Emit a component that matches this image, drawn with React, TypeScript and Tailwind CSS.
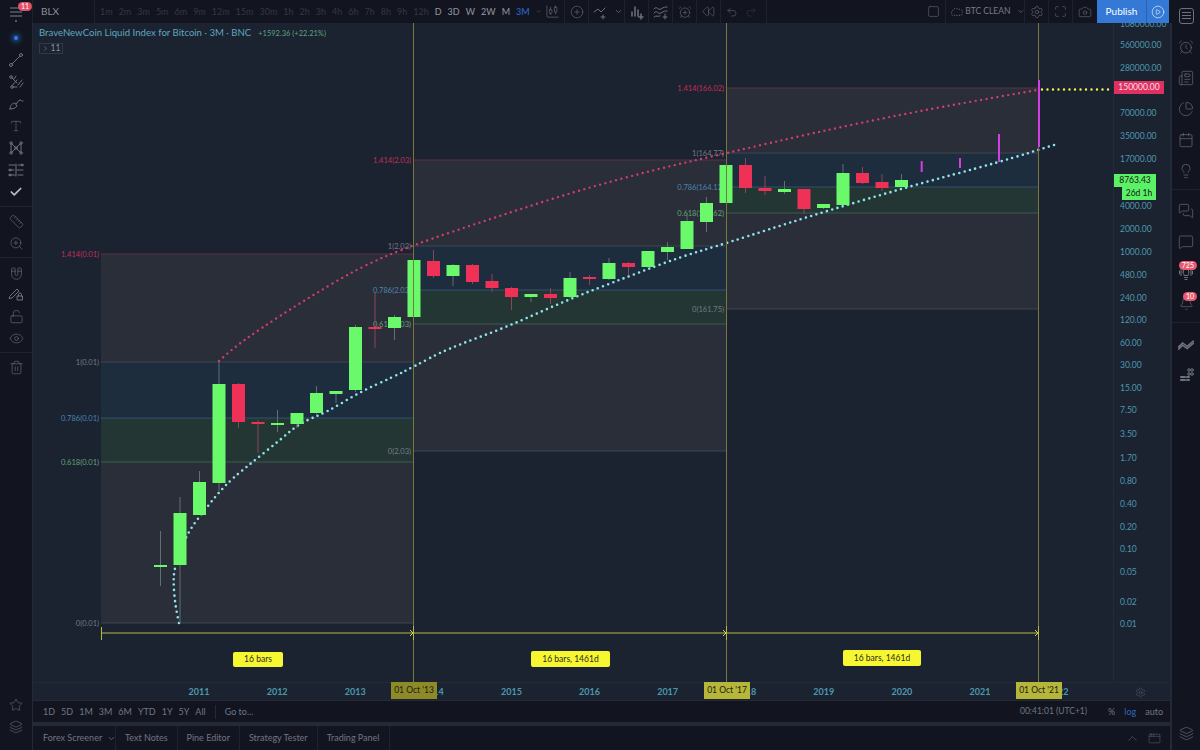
import type { ReactNode } from "react";
import {
  AlarmClock, AlarmClockPlus, Bell, Calendar, Camera, CandlestickChart, ChartPie, Check, ChevronDown, ChevronUp,
  ChevronRight, CirclePlay, CirclePlus, Eye, Layers, Lightbulb, LockOpen, Magnet, Maximize, MessageSquare,
  MessagesSquare, Newspaper, Redo2, Rewind, Ruler, Settings, Square, Star, Trash2, Type, Undo2, ZoomIn, AppWindow,
} from "lucide-react";

type Candle = [number, number, number, number, "g" | "r"];

// top of body, bottom of body, wick top, wick bottom, colour
const candles: Candle[] = [
  [565, 567, 531, 586, "g"], [513, 565, 497, 623, "g"], [482, 515, 471, 515, "g"], [384, 483, 362, 491, "g"],
  [384, 422, 383, 428, "r"], [422, 424, 420, 453, "r"], [423, 425, 410, 432, "g"], [413, 424, 413, 428, "g"],
  [393, 413, 386, 414, "g"], [391, 394, 391, 403, "g"], [327, 390, 325, 392, "g"], [327, 329, 293, 348, "r"],
  [317, 328, 315, 340, "g"], [260, 317, 260, 317, "g"], [261, 276, 250, 278, "r"], [265, 276, 264, 286, "g"],
  [265, 282, 264, 284, "r"], [281, 288, 274, 292, "r"], [288, 297, 287, 310, "r"], [294, 297, 294, 302, "g"],
  [294, 298, 288, 304, "r"], [278, 297, 272, 298, "g"], [277, 279, 275, 285, "r"], [263, 279, 258, 280, "g"],
  [263, 267, 262, 275, "r"], [251, 267, 251, 268, "g"], [247, 252, 242, 260, "g"], [221, 249, 213, 249, "g"],
  [203, 222, 197, 232, "g"], [165, 203, 165, 203, "g"], [165, 188, 158, 193, "r"], [188, 191, 176, 195, "r"],
  [189, 192, 181, 194, "g"], [189, 209, 189, 214, "r"], [204, 208, 204, 209, "g"], [173, 205, 164, 205, "g"],
  [173, 183, 167, 184, "r"], [182, 188, 174, 191, "r"], [180, 187, 174, 187, "g"],
];

const fibBoxes = [
  { x: 101, w: 312, a: 254, b: 362, c: 418, d: 462, e: 623, tags: ["1.414(0.01)", "1(0.01)", "0.786(0.01)", "0.618(0.01)", "0(0.01)"] },
  { x: 413, w: 313, a: 160, b: 246, c: 290, d: 324, e: 451, tags: ["1.414(2.03)", "1(2.03)", "0.786(2.03)", "0.618(2.03)", "0(2.03)"] },
  { x: 726, w: 312, a: 88, b: 153, c: 187, d: 213, e: 309, tags: ["1.414(166.02)", "1(164.77)", "0.786(164.12)", "0.618(163.62)", "0(161.75)"] },
];

const tagColors = ["#c22f58", "#737a86", "#4a86b0", "#63a37a", "#737a86"];

const cyanPts = [
  [179, 623], [176, 610], [173.5, 587], [174, 568], [187, 533], [207, 507], [221, 490], [233, 478], [255, 460],
  [280, 440], [300, 423], [327, 412], [360, 392], [393, 377], [413, 367], [447, 349], [507, 327], [567, 300],
  [627, 277], [680, 257], [727, 243], [807, 217], [907, 187], [1000, 162], [1057, 144],
];
const redPts = [
  [219, 361], [232, 349], [260, 329], [300, 303], [360, 267], [413, 245], [493, 218], [573, 192], [653, 170],
  [727, 153], [813, 133], [913, 112], [1037, 90],
];

const smooth = (pts: number[][]) => {
  let d = `M${pts[0][0]} ${pts[0][1]}`;
  for (let i = 1; i < pts.length - 1; i++) {
    const mx = (pts[i][0] + pts[i + 1][0]) / 2;
    const my = (pts[i][1] + pts[i + 1][1]) / 2;
    d += ` Q${pts[i][0]} ${pts[i][1]} ${mx} ${my}`;
  }
  const last = pts[pts.length - 1];
  return d + ` L${last[0]} ${last[1]}`;
};

const ticks: [string, number][] = [
  ["1080000.00", 24], ["560000.00", 45], ["280000.00", 68], ["70000.00", 113], ["35000.00", 136], ["17000.00", 159],
  ["4000.00", 206], ["2000.00", 229], ["1000.00", 252], ["480.00", 275], ["240.00", 298], ["120.00", 320],
  ["60.00", 343], ["30.00", 365], ["15.00", 388], ["7.50", 410], ["3.50", 434], ["1.70", 458], ["0.80", 481],
  ["0.40", 504], ["0.20", 527], ["0.10", 549], ["0.05", 572], ["0.02", 602], ["0.01", 624],
];

const dimFrames = ["1m", "2m", "3m", "5m", "6m", "9m", "12m", "15m", "30m", "1h", "2h", "3h", "4h", "6h", "7h", "8h", "9h", "12h"];
const years = ["2011", "2012", "2013", "2014", "2015", "2016", "2017", "2018", "2019", "2020", "2021", "2022"];
const ranges = ["1D", "5D", "1M", "3M", "6M", "YTD", "1Y", "5Y", "All"];
const tabs = ["Text Notes", "Pine Editor", "Strategy Tester", "Trading Panel"];

function Stroke({ size = 16, children }: { size?: number; children: ReactNode }) {
  return (
    <svg width={size} height={size} viewBox="0 0 16 16" fill="none" stroke="currentColor" strokeWidth="1" strokeLinecap="round" strokeLinejoin="round">
      {children}
    </svg>
  );
}

const TrendLine = () => (
  <Stroke>
    <circle cx="3" cy="13" r="1.5" /><circle cx="13" cy="3" r="1.5" /><path d="M4.2 11.8 11.8 4.2" />
  </Stroke>
);
const FibFork = () => (
  <Stroke>
    <circle cx="3" cy="3" r="1.3" /><circle cx="4" cy="13" r="1.3" /><path d="M4 4l5 5M5.3 13H9M4 11.8 9 6M8 2l-2 3M14 6l-4 5M15 9l-3 4" />
  </Stroke>
);
const Brush = () => (
  <Stroke>
    <path d="M2 13c0-4 3-6 5-6l2 3c-1 2-4 3-7 3ZM8 8c2-1 2-4 4-4s1 2 3 1" />
  </Stroke>
);
const Xabcd = () => (
  <Stroke>
    <circle cx="3" cy="3" r="1.2" /><circle cx="13" cy="3" r="1.2" /><circle cx="8" cy="8" r="1.2" /><circle cx="3" cy="13" r="1.2" /><circle cx="13" cy="13" r="1.2" />
    <path d="M3 4.2v7.6M13 4.2v7.6M3.8 3.8l3.5 3.5M12.2 3.8 8.7 7.3M3.8 12.2l3.5-3.5M12.2 12.2 8.7 8.7" />
  </Stroke>
);
const Prediction = () => (
  <Stroke>
    <path d="M1 3h6M10 3h5M1 8h5M9 8h6M1 13h6M10 13h5M8 2v12" />
    <circle cx="2" cy="8" r="1" /><circle cx="14" cy="3" r="1" /><circle cx="2" cy="13" r="1" />
  </Stroke>
);
const PencilLock = () => (
  <Stroke>
    <path d="M2 10 9 3l2 2-7 7-2.500 .5Z" /><rect x="9.500" y="10" width="5" height="4" /><path d="M10.500 10V8.500a1.500 1.500 0 0 1 3 0V10" />
  </Stroke>
);
const Hotline = () => (
  <Stroke>
    <path d="M5 7a3 3 0 1 1 6 0c0 1.500-1 2-1 3.500H6C6 9 5 8.500 5 7ZM6.500 12.500h3M7 14.500h2M3 4.500v6M1.500 6v3M13 4.500v6M14.500 6v3" />
  </Stroke>
);
const Wave = () => (
  <svg width="18" height="18" viewBox="0 0 16 16" fill="none" stroke="currentColor" strokeWidth="1.300">
    <path d="M1 11l4-4 4 3 6-5M1 13l4-4 4 3 6-5" />
  </svg>
);
const DotsGrid = () => (
  <Stroke>
    <circle cx="11" cy="3" r="1.300" /><circle cx="14" cy="3" r="1.300" /><circle cx="11" cy="7" r="1.300" /><circle cx="14" cy="7" r="1.300" />
    <path d="M3 10h4M3 13h4M9 10h2M9 13h2" strokeWidth="2" />
  </Stroke>
);
const BarsPlus = () => (
  <Stroke>
    <path d="M3 12V8M6 12V3M9 12V6M12 10v5M10 13h4" strokeWidth="1.500" />
  </Stroke>
);
const WavesPlus = () => (
  <Stroke>
    <path d="M1 5c3-4 4 2 7 0s4-2 6-2M1 9c3-4 4 2 7 0s4-2 6-2M1 13c2-2 4 0 6-1M12 10v5M10 13h4" />
  </Stroke>
);
const LinePlus = () => (
  <Stroke>
    <path d="M1 8l4-3 3 3 4-4M10 11v4M8 13h4" />
  </Stroke>
);

function Tool({ children }: { children: ReactNode }) {
  return <div className="flex h-[22px] items-center justify-center text-[#6b7280]">{children}</div>;
}

function TopIcon({ w, children, border = false }: { w: number; children: ReactNode; border?: boolean }) {
  return (
    <div style={{ width: w }} className={`flex h-full shrink-0 items-center justify-center text-[#6b7280] ${border ? "border-r border-[#1e222c]" : ""}`}>
      {children}
    </div>
  );
}

function Widget({ children, badge }: { children: ReactNode; badge?: string }) {
  return (
    <div className="relative flex h-[31px] shrink-0 items-center justify-center text-[#6b7280]">
      {children}
      {badge && (
        <span className="absolute right-[3px] top-[4px] rounded-full bg-[#e85a6f] px-[3px] text-[7px] leading-[9px] text-white">{badge}</span>
      )}
    </div>
  );
}

export default function App() {
  return (
    <div className="flex h-[750px] w-[1200px] overflow-hidden bg-[#232936] font-['Lato',sans-serif] text-[9px] text-[#8a909c]">
      <div className="flex w-[1172px] shrink-0 flex-col">
        {/* top bar */}
        <div className="relative z-10 flex h-[23px] shrink-0 items-center bg-[#12151f]">
          <div className="relative flex h-full w-[33px] shrink-0 items-center justify-center border-r border-[#1e222c] text-[#7a808c]">
            <svg width="14" height="12" viewBox="0 0 14 12" fill="none" stroke="currentColor" strokeWidth="1">
              <path d="M1 2h12M1 6h12M1 10h12" />
            </svg>
            <span className="absolute left-[18px] top-[2px] rounded-full bg-[#e5506a] px-[3px] text-[7px] leading-[9px] text-white">11</span>
            <span className="absolute left-[15px] top-[20px] h-[2px] w-[2px] rounded-full bg-[#6b7280]" />
          </div>
          <div className="flex h-full w-[62px] shrink-0 items-center border-r border-[#1e222c] pl-2 text-[10px] text-[#8a909c]">BLX</div>
          <div className="flex w-[446px] shrink-0 items-center gap-[6px] pl-[5px] text-[9px]">
            {dimFrames.map((f) => (
              <span key={f} className="text-[#333844]">{f}</span>
            ))}
            {["D", "3D", "W", "2W", "M"].map((f) => (
              <span key={f} className="font-medium text-[#8a909c]">{f}</span>
            ))}
            <span className="font-medium text-[#2c66c4]">3M</span>
            <ChevronDown size={9} className="text-[#6b7280]" />
          </div>
          <TopIcon w={24} border><CandlestickChart size={15} strokeWidth={1} /></TopIcon>
          <TopIcon w={24} border><CirclePlus size={14} strokeWidth={1} /></TopIcon>
          <TopIcon w={23}><LinePlus /></TopIcon>
          <TopIcon w={13} border><ChevronDown size={9} /></TopIcon>
          <TopIcon w={24} border><BarsPlus /></TopIcon>
          <TopIcon w={24} border><WavesPlus /></TopIcon>
          <TopIcon w={24} border><AlarmClockPlus size={14} strokeWidth={1} /></TopIcon>
          <TopIcon w={24} border><Rewind size={13} strokeWidth={1} /></TopIcon>
          <TopIcon w={22}><Undo2 size={12} strokeWidth={1} /></TopIcon>
          <TopIcon w={16}><span className="text-[#3a3f4b]"><Redo2 size={12} strokeWidth={1} /></span></TopIcon>
          <div className="h-full w-[8px] border-r border-[#1e222c]" />
          <div className="flex-1" />
          <TopIcon w={24} border><Square size={13} strokeWidth={1} /></TopIcon>
          <div className="flex h-full w-[79px] shrink-0 items-center gap-[2px] border-r border-[#1e222c] pl-1 text-[8.500px] text-[#757b88]">
            <svg width="16" height="12" viewBox="0 0 16 12" fill="none" stroke="currentColor" strokeDasharray="1.500 1.500">
              <path d="M3 10a3 3 0 0 1 0-5 4 4 0 0 1 7-2 3.500 3.500 0 0 1 3 7Z" />
            </svg>
            <span className="whitespace-nowrap">BTC CLEAN</span>
            <ChevronDown size={9} className="ml-[4px]" />
          </div>
          <TopIcon w={24} border><Settings size={14} strokeWidth={1} /></TopIcon>
          <TopIcon w={24} border><Maximize size={13} strokeWidth={1} /></TopIcon>
          <TopIcon w={24}><Camera size={14} strokeWidth={1} /></TopIcon>
          <div className="flex h-full w-[49px] shrink-0 items-center justify-center bg-[#3579d6] text-[10px] text-white">Publish</div>
          <div className="flex h-full w-[23px] shrink-0 items-center justify-center border-l border-[#2a62b0] bg-[#3579d6] text-white">
            <CirclePlay size={14} strokeWidth={1} />
          </div>
          <div className="w-[3px] shrink-0" />
        </div>

        <div className="flex min-h-0 flex-1">
          {/* left tools */}
          <div className="flex w-[32px] shrink-0 flex-col bg-[#12151f] pt-[4px]">
            <div className="border-b border-[#1e222c] pb-[3px]">
              <Tool><span className="h-[4px] w-[4px] rounded-full bg-[#2f7de0] shadow-[0_0_5px_2px_#1f4f9a]" /></Tool>
              <Tool><TrendLine /></Tool>
              <Tool><FibFork /></Tool>
              <Tool><Brush /></Tool>
              <Tool><Type size={14} strokeWidth={1} /></Tool>
              <Tool><Xabcd /></Tool>
              <Tool><Prediction /></Tool>
              <Tool><span className="text-[#b9bdc6]"><Check size={14} strokeWidth={3} /></span></Tool>
            </div>
            <div className="border-b border-[#1e222c] py-[3px]">
              <Tool><Ruler size={15} strokeWidth={1} /></Tool>
              <Tool><ZoomIn size={15} strokeWidth={1} /></Tool>
            </div>
            <div className="border-b border-[#1e222c] py-[3px]">
              <Tool><Magnet size={15} strokeWidth={1} className="rotate-[135deg]" /></Tool>
              <Tool><PencilLock /></Tool>
              <Tool><LockOpen size={15} strokeWidth={1} /></Tool>
              <Tool><Eye size={15} strokeWidth={1} /></Tool>
            </div>
            <div className="py-[3px]">
              <Tool><Trash2 size={15} strokeWidth={1} /></Tool>
            </div>
            <div className="mt-auto pb-[12px]">
              <Tool><Star size={14} strokeWidth={1} /></Tool>
              <Tool><Layers size={14} strokeWidth={1} /></Tool>
            </div>
          </div>

          {/* centre column */}
          <div className="ml-px flex w-[1137px] shrink-0 flex-col">
            <div className="flex h-[659px] shrink-0 bg-[#1b2230]">
              <div className="relative w-[1080px] shrink-0">
                <svg width="1080" height="659" viewBox="33 23 1080 659" className="block">
                  {fibBoxes.map((b) => (
                    <g key={b.x}>
                      <rect x={b.x} y={b.a} width={b.w} height={b.b - b.a} fill="#2a2e38" />
                      <rect x={b.x} y={b.b} width={b.w} height={b.c - b.b} fill="#1e2d3e" />
                      <rect x={b.x} y={b.c} width={b.w} height={b.d - b.c} fill="#243634" />
                      <rect x={b.x} y={b.d} width={b.w} height={b.e - b.d} fill="#2a2e38" />
                      <path d={`M${b.x} ${b.a}h${b.w}`} stroke="#5a3346" />
                      <path d={`M${b.x} ${b.b}h${b.w}M${b.x} ${b.e}h${b.w}`} stroke="#3f4653" />
                      <path d={`M${b.x} ${b.c}h${b.w}`} stroke="#33516a" />
                      <path d={`M${b.x} ${b.d}h${b.w}`} stroke="#3c5a50" />
                      {b.tags.map((t, i) => (
                        <text key={t} x={b.x - 2} y={[b.a, b.b, b.c, b.d, b.e][i] + 2.500} textAnchor="end" fontSize="7.500" fill={tagColors[i]}>
                          {t}
                        </text>
                      ))}
                    </g>
                  ))}
                  <path d={smooth(redPts)} fill="none" stroke="#cf3f6a" strokeWidth="2.400" strokeLinecap="round" strokeDasharray="0 5.500" />
                  <path d={smooth(cyanPts)} fill="none" stroke="#8fe3ec" strokeWidth="2.600" strokeLinecap="round" strokeDasharray="0 5.500" />
                  <path d="M1042 89.500H1113" fill="none" stroke="#f4f45c" strokeWidth="2.400" strokeLinecap="round" strokeDasharray="0 5.500" />
                  {candles.map(([top, bottom, hi, lo, c], i) => {
                    const x = 160.500 + i * 19.500;
                    const color = c === "g" ? "#69f96a" : "#ef3157";
                    return (
                      <g key={i}>
                        <path d={`M${x} ${hi}V${lo}`} stroke={c === "g" ? "#5f6f72" : "#8a4658"} />
                        <rect x={x - 6.500} y={top} width="13" height={bottom - top} fill={color} />
                      </g>
                    );
                  })}
                  <path d="M413.500 23V682M726.500 23V682M1038.500 23V682" stroke="#78773f" />
                  <path d="M921.700 161V172M960 158V168M999 134V162M1039 80V147" stroke="#d33ee0" strokeWidth="2" />
                  <path d="M101 633H1038" stroke="#b8b84a" />
                  <path d="M101.500 627V640M413.500 626V640M726.500 626V640M1038.500 626V640" stroke="#b8b84a" />
                  <path d="M410 630l3 3-3 3M723 630l3 3-3 3M1035 630l3 3-3 3" fill="none" stroke="#d6d650" />
                </svg>
                <div className="absolute left-[6px] top-[3px] flex items-baseline gap-[7px] whitespace-nowrap">
                  <span className="text-[9.600px] text-[#5ea8bf]">BraveNewCoin Liquid Index for Bitcoin · 3M · BNC</span>
                  <span className="text-[7.500px] text-[#5aa582]">+1592.36 (+22.21%)</span>
                </div>
                <div className="absolute left-[6px] top-[20px] flex h-[11px] w-[24px] items-center justify-center gap-[2px] border border-[#333845] text-[8.500px] text-[#8a909c]">
                  <ChevronRight size={7} />11
                </div>
                <span className="absolute left-[200px] top-[629px] flex h-[15px] w-[50px] items-center justify-center rounded-[2px] bg-[#f7f731] text-[8.500px] text-[#2a2a20]">16 bars</span>
                <span className="absolute left-[498px] top-[628px] flex h-[16px] w-[79px] items-center justify-center rounded-[2px] bg-[#f7f731] text-[8.500px] text-[#2a2a20]">16 bars, 1461d</span>
                <span className="absolute left-[810px] top-[627px] flex h-[16px] w-[78px] items-center justify-center rounded-[2px] bg-[#f7f731] text-[8.500px] text-[#2a2a20]">16 bars, 1461d</span>
              </div>

              {/* price axis */}
              <div className="relative flex-1 overflow-hidden border-l border-[#232936] pl-[6px] text-[8.500px] text-[#4e98ae]">
                {ticks.map(([label, y], i) => (
                  <div key={label} className="h-[12px] leading-[12px]" style={{ marginTop: i === 0 ? y - 29 : y - ticks[i - 1][1] - 12 }}>
                    {label}
                  </div>
                ))}
                <span className="absolute left-0 top-[58px] flex h-[13px] w-[50px] items-center justify-center bg-[#e0305f] text-[8.500px] text-[#f7dfe6]">150000.00</span>
                <span className="absolute left-0 top-[151px] flex h-[13px] w-[42px] items-center justify-center bg-[#5cf067] text-[8.500px] text-[#10180f]">8763.43</span>
                <span className="absolute left-[8px] top-[164px] flex h-[13px] w-[34px] items-center justify-center bg-[#5cf067] text-[8.500px] text-[#10180f]">26d 1h</span>
              </div>
            </div>

            {/* time axis */}
            <div className="relative flex h-[18px] shrink-0 items-center border-t border-[#232936] bg-[#1b2230] pl-[127px] text-[9px] font-bold text-[#4e98ae]">
              {years.map((y) => (
                <span key={y} className="w-[78.100px] shrink-0 text-center">{y}</span>
              ))}
              <span className="absolute left-[358px] top-[-1px] flex h-[17px] w-[46px] items-center justify-center bg-[#8c8b28] text-[8.500px] font-normal text-[#1b1c12]">01 Oct '13</span>
              <span className="absolute left-[671px] top-[-1px] flex h-[17px] w-[46px] items-center justify-center bg-[#b6b63a] text-[8.500px] font-normal text-[#1b1c12]">01 Oct '17</span>
              <span className="absolute left-[983px] top-[-1px] flex h-[17px] w-[46px] items-center justify-center bg-[#b6b63a] text-[8.500px] font-normal text-[#1b1c12]">01 Oct '21</span>
              <span className="absolute left-[1102px] top-[4px] text-[#5c6370]"><Settings size={11} strokeWidth={1} /></span>
            </div>

            {/* range bar */}
            <div className="flex h-[22px] shrink-0 items-center border-t border-[#232936] bg-[#12151f] pl-[10px] pr-[7px] text-[9px] text-[#6f7684]">
              <div className="flex gap-[6px]">
                {ranges.map((r) => (
                  <span key={r}>{r}</span>
                ))}
              </div>
              <span className="ml-[9px] h-[14px] border-l border-[#232936]" />
              <span className="ml-[9px]">Go to...</span>
              <span className="ml-auto text-[8.500px]">00:41:01 (UTC+1)</span>
              <span className="ml-[21px]">%</span>
              <span className="ml-[9px] text-[#2f66ba]">log</span>
              <span className="ml-[9px]">auto</span>
            </div>

            {/* bottom tabs */}
            <div className="mt-[4px] flex min-h-0 flex-1 items-center bg-[#12151f] text-[9px] text-[#6f7684]">
              <div className="flex h-full w-[83px] shrink-0 items-center gap-[5px] border-r border-[#1e222c] pl-[10px]">
                <span className="whitespace-nowrap">Forex Screener</span>
                <ChevronDown size={9} className="shrink-0" />
              </div>
              {tabs.map((t) => (
                <div key={t} className="flex h-full items-center whitespace-nowrap border-r border-[#1e222c] px-[9px]">{t}</div>
              ))}
              <div className="ml-auto flex items-center gap-[8px] pr-[9px] text-[#5c6370]">
                <ChevronUp size={15} strokeWidth={1} />
                <AppWindow size={13} strokeWidth={1} />
              </div>
            </div>
          </div>
        </div>
      </div>

      {/* right widgets */}
      <div className="flex flex-1 flex-col bg-[#12151f]">
        <Widget>
          <span className="flex h-[16px] w-[15px] flex-col justify-center gap-[2px] rounded-[3px] border border-[#6b7280] px-[2px]">
            <span className="h-px bg-[#6b7280]" /><span className="h-px bg-[#6b7280]" /><span className="h-px bg-[#6b7280]" />
          </span>
        </Widget>
        <Widget><AlarmClock size={16} strokeWidth={1} /></Widget>
        <Widget><Newspaper size={16} strokeWidth={1} /></Widget>
        <Widget><ChartPie size={16} strokeWidth={1} /></Widget>
        <Widget><Calendar size={16} strokeWidth={1} /></Widget>
        <Widget><Lightbulb size={16} strokeWidth={1} /></Widget>
        <div className="mb-[5px] mt-[3px] border-t border-[#1e222c]" />
        <Widget><MessagesSquare size={16} strokeWidth={1} /></Widget>
        <Widget><MessageSquare size={16} strokeWidth={1} /></Widget>
        <Widget badge="725"><Hotline /></Widget>
        <Widget badge="10"><Bell size={15} strokeWidth={1} /></Widget>
        <div className="mb-[5px] mt-[3px] border-t border-[#1e222c]" />
        <Widget><Wave /></Widget>
        <Widget><DotsGrid /></Widget>
        <div className="mt-auto flex justify-center pb-[9px] text-[#6b7280]">
          <Layers size={15} strokeWidth={1} />
        </div>
      </div>
    </div>
  );
}
